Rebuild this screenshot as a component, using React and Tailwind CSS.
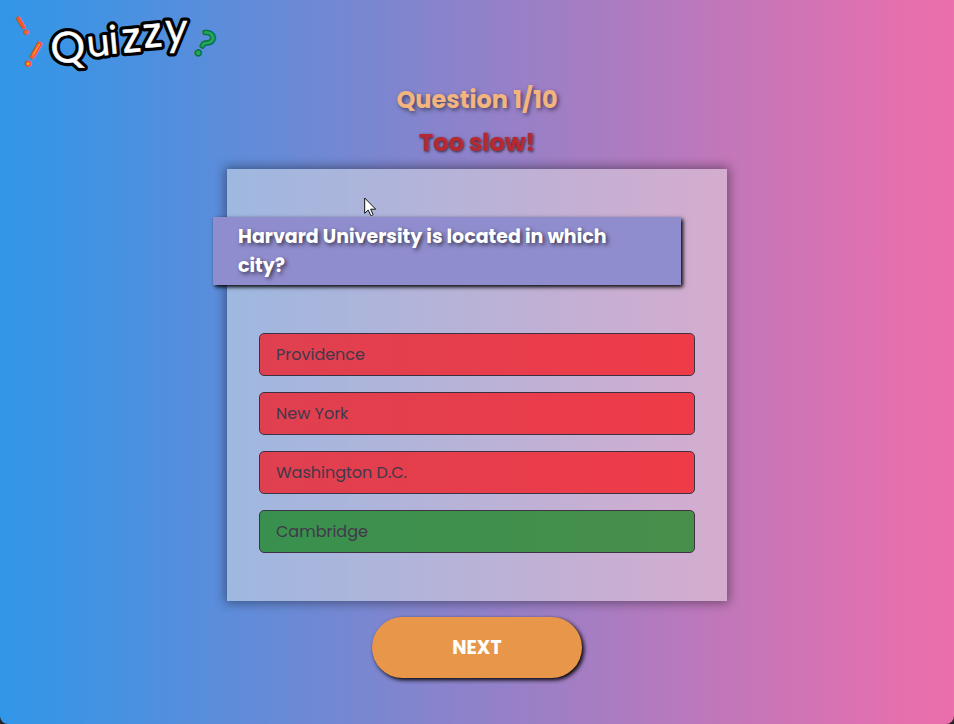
const answers = [
  { text: 'Providence', correct: false },
  { text: 'New York', correct: false },
  { text: 'Washington D.C.', correct: false },
  { text: 'Cambridge', correct: true },
];

function Letters() {
  return (
    <>
      <text fontSize="44" transform="translate(51 51) rotate(-2)">Q</text>
      <text fontSize="36" transform="translate(88 45) rotate(-6)">u</text>
      <text fontSize="38" transform="translate(110 42) rotate(-5)">i</text>
      <text fontSize="42" transform="translate(123 41) rotate(-5)">z</text>
      <text fontSize="42" transform="translate(144 36) rotate(-5)">z</text>
      <text fontSize="40" transform="translate(165 31) rotate(0)">y</text>
    </>
  );
}

function Logo() {
  return (
    <svg
      viewBox="0 0 216 60"
      className="block h-[60px] w-[216px] overflow-visible font-['Poppins',sans-serif]"
      role="img"
      aria-label="Quizzy"
    >
      <g className="font-['Lato','Noto_Sans',sans-serif]" fill="#ffbe2e" stroke="#f4552c" strokeWidth="2" strokeLinejoin="round">
        <text fontSize="25" transform="translate(24 23) rotate(-30)">!</text>
        <text fontSize="36" transform="translate(23 51) rotate(30)">!</text>
      </g>
      <g strokeLinejoin="round" strokeLinecap="round">
        <g fill="#000" stroke="#000" strokeWidth="7">
          <Letters />
        </g>
        <g fill="#fff" stroke="#fff" strokeWidth="0.5">
          <Letters />
        </g>
      </g>
      <g
        className="font-['Lato','Noto_Sans',sans-serif]"
        transform="translate(191 39) rotate(30)"
        strokeLinejoin="round"
      >
        <text fontSize="36" fill="#087044" stroke="#087044" strokeWidth="3">?</text>
        <text fontSize="36" fill="#20a75b">?</text>
      </g>
    </svg>
  );
}

function Pointer() {
  return (
    <svg className="absolute top-7 left-[137px] h-[20px] w-[13px]" viewBox="0 0 13 20" aria-hidden="true">
      <path
        d="M.7 1v15.3l3.5-3.3 2.5 5.3c.3.7 2.6-.2 2.3-1l-2.4-5.1h5.1z"
        fill="#fff"
        stroke="#111"
        strokeWidth="1"
        strokeLinejoin="round"
      />
    </svg>
  );
}

export default function App() {
  return (
    <div className="min-h-screen bg-[#252525] font-['Poppins','Inter',sans-serif]">
      <div className="min-h-screen rounded-b-lg bg-[linear-gradient(to_right,#3296e8_0%,#3b94e5_6%,#e66fae_95%,#ec6eac_100%)]">
        <header className="h-20 pt-3">
          <Logo />
        </header>
        <main className="flex flex-col items-center pb-10">
          <h1 className="text-2xl leading-[40px] font-bold text-[#f2b57f] [text-shadow:2px_2px_4px_#00000080]">
            Question 1/10
          </h1>
          <h2 className="mt-1 mb-2 text-2xl leading-[37px] font-bold text-[#b52932] [text-shadow:1px_1px_3px_#000000b0]">
            Too slow!
          </h2>
          <section className="relative w-full max-w-[500px] bg-[#ebece6]/46 px-8 py-12 shadow-[0_0_10px_2px_#00000066]">
            <p className="-ml-[46px] max-w-[468px] bg-[#908dce] py-[5px] pr-12 pl-[25px] text-[19px] leading-[29px] font-bold text-white shadow-[2px_2px_4px_#000000] [text-shadow:2px_2px_4px_#000000a0]">
              Harvard University is located in which city?
            </p>
            <div className="mt-12 flex flex-col gap-4">
              {answers.map((answer) => (
                <button
                  key={answer.text}
                  type="button"
                  className={`h-[43px] rounded-[5px] border border-[#3d3144] px-4 text-left text-base text-[#41384a] ${
                    answer.correct
                      ? 'bg-[linear-gradient(to_right,#39904e,#488f4b)]'
                      : 'bg-[linear-gradient(to_right,#df4050,#ef3b48)]'
                  }`}
                >
                  {answer.text}
                </button>
              ))}
            </div>
            <Pointer />
          </section>
          <button
            type="button"
            className="mt-4 h-[61px] w-[210px] rounded-full bg-[#e8974a] text-[19px] leading-[29px] font-bold text-white shadow-[2px_2px_4px_#000000]"
          >
            NEXT
          </button>
        </main>
      </div>
    </div>
  );
}
